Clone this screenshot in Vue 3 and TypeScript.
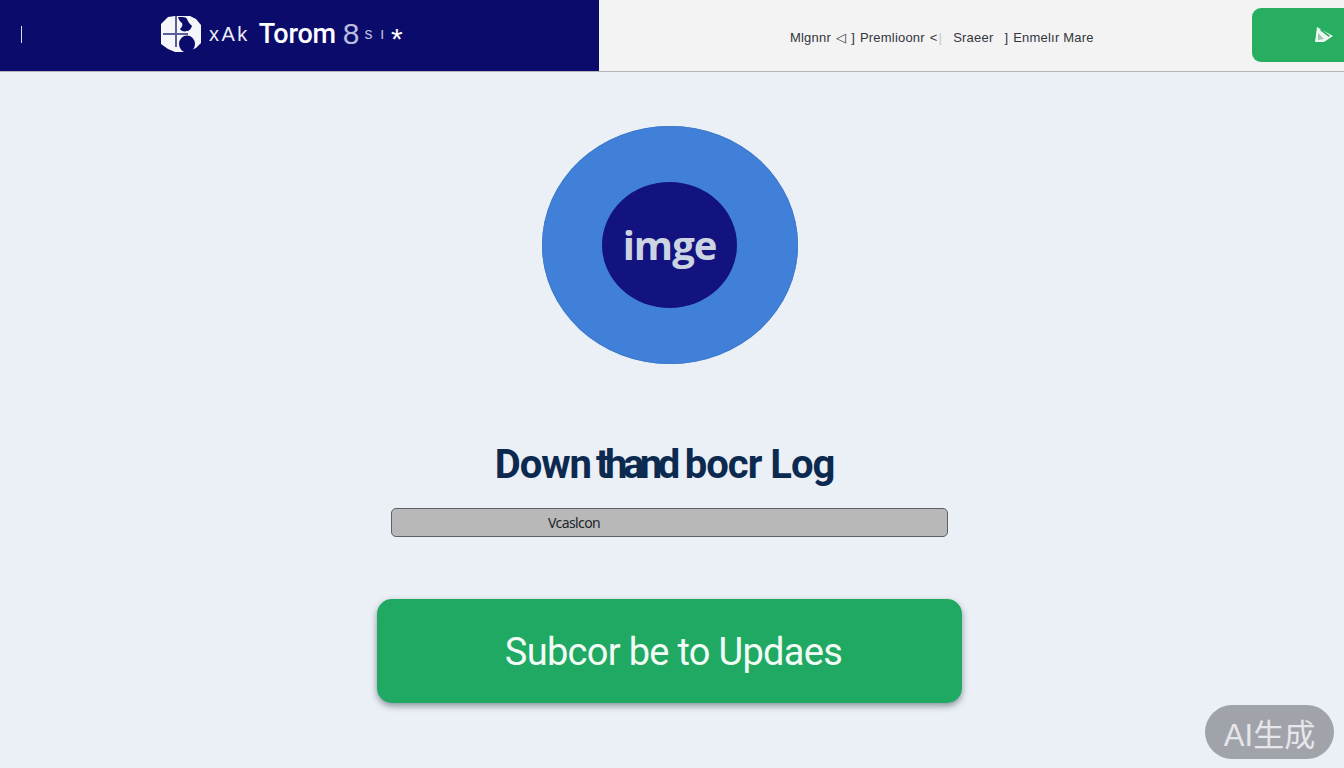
<template>
  <div class="page">
    <header class="topbar">
      <div class="topbar__brand">
        <span class="tick"></span>
        <svg class="logo" width="42" height="36" viewBox="0 0 42 36">
          <path d="M8 1L15 0H30L36 3L41 9V27L36 32L27 36H15L8 33L1 28V8Z" fill="#f5f6fa" />
          <path d="M15 0H17V31H15Z" fill="#5a5e96" />
          <path d="M3 17H28V19H3Z" fill="#5a5e96" />
          <path d="M18 1C23 1 26 1 27 3C28 6 30 8 32 10C31 13 29 15 27 15C24 16 21 15 20 13C22 11 23 9 22 7C20 6 19 4 18 1Z" fill="#0b0b6b" />
          <ellipse cx="27" cy="28" rx="8" ry="8.5" fill="#0b0b6b" />
        </svg>
        <span class="brand-small">xAk</span>
        <span class="brand-name">Torom</span>
        <span class="brand-eight">8</span>
        <span class="brand-tail">s ı</span>
        <span class="brand-star">*</span>
      </div>
      <nav class="topbar__nav">
        <div class="nav-links">
          <span>Mlgnnr</span>
          <span class="nav-mark">◁</span>
          <span>]</span>
          <span>Premlioonr</span>
          <span class="nav-mark">&lt;</span>
          <span class="nav-sep">|</span>
          <span class="wide">Sraeer</span>
          <span>]</span>
          <span>Enmelır Mare</span>
        </div>
        <button class="top-action" type="button" aria-label="Action">
          <svg width="18" height="16" viewBox="0 0 18 16">
            <path d="M2 0L18 9L9 15H0Z" fill="#eef7f1" />
            <path d="M6 1.8L15 8.8L13.6 9.8L5 3.2Z" fill="#27ae60" />
            <path d="M3 6L9 12L3 13Z" fill="#9fc9b0" />
          </svg>
        </button>
      </nav>
    </header>

    <main class="content">
      <div class="disc">
        <div class="disc__inner">imge</div>
      </div>
      <h1 class="title">Down<span class="title__squeeze">thand</span> bocr Log</h1>
      <div class="field"><span>Vcaslcon</span></div>
      <button class="subscribe" type="button">Subcor be to Updaes</button>
    </main>

    <div class="ai-badge">AI生成</div>
  </div>
</template>

<script setup lang="ts">
</script>

<style>
html,
body {
  margin: 0;
  background: #ebeff6;
}
</style>

<style scoped>
.page {
  height: 768px;
  overflow: hidden;
  position: relative;
  background: #ebeff6;
  font-family: "Liberation Sans", Arial, sans-serif;
}

.topbar {
  height: 71px;
  display: flex;
  box-shadow: 0 1px 0 #b4b6bb;
}

.topbar__brand {
  width: 599px;
  box-sizing: border-box;
  padding: 0 0 3px 21px;
  background: #0b0b6b;
  color: #fff;
  display: flex;
  align-items: center;
}

.tick {
  width: 1px;
  height: 17px;
  margin-right: 138px;
  background: #d9dcf0;
}

.logo {
  flex: none;
  margin-right: 7px;
}

.brand-small {
  font-size: 20px;
  margin-right: 9px;
  letter-spacing: 2.5px;
  color: #eceef8;
}

.brand-name {
  font-family: Roboto, sans-serif;
  font-size: 27px;
  font-weight: 500;
  letter-spacing: -0.2px;
  margin-right: 7px;
}

.brand-eight {
  font-size: 30px;
  color: #b9bedf;
  margin-right: 5px;
}

.brand-tail {
  font-size: 16px;
  letter-spacing: 1.5px;
  color: #b9bedf;
  margin-right: 5px;
}

.brand-star {
  font-size: 30px;
  line-height: 1;
  margin-top: 10px;
}

.topbar__nav {
  flex: 1;
  padding: 0 0 0 191px;
  background: #f3f3f4;
  display: flex;
  align-items: center;
  justify-content: space-between;
  overflow: hidden;
}

.nav-links {
  display: flex;
  align-items: center;
  gap: 5px;
  padding-top: 3px;
  font-family: "Liberation Sans", sans-serif;
  font-size: 13px;
  letter-spacing: 0.2px;
  color: #33363c;
  white-space: nowrap;
}

.nav-mark {
  font-size: 13px;
}

.nav-sep {
  color: #c6c8cc;
  margin-left: -4px;
  margin-right: 6px;
}

.wide {
  margin-right: 6px;
}

.top-action {
  width: 110px;
  height: 54px;
  margin-right: -18px;
  margin-top: -1px;
  padding: 0 29px 0 0;
  flex: none;
  border: 0;
  border-radius: 9px;
  background: #27ae60;
  display: flex;
  align-items: center;
  justify-content: flex-end;
}

.content {
  display: flex;
  flex-direction: column;
  align-items: center;
  padding: 55px 5px 0 0;
}

.disc {
  width: 256px;
  height: 238px;
  border-radius: 50%;
  background: #4180d8;
  box-shadow: inset 0 0 0 1px #3f7bcd;
  display: flex;
  align-items: center;
  justify-content: center;
}

.disc__inner {
  width: 135px;
  height: 126px;
  border-radius: 50%;
  background: #13137f;
  color: #ccd3e2;
  font-family: "Open Sans", sans-serif;
  font-size: 40px;
  font-weight: 700;
  letter-spacing: -1px;
  display: flex;
  align-items: center;
  justify-content: center;
  margin-top: -1px;
}

.title {
  margin: 76px 10px 0 0;
  height: 68px;
  font-family: Roboto, sans-serif;
  font-size: 40px;
  line-height: 50px;
  font-weight: 700;
  letter-spacing: -1px;
  color: #0c2a50;
}

.title__squeeze {
  margin-left: 5px;
  letter-spacing: -4.5px;
}

.field {
  width: 557px;
  height: 29px;
  box-sizing: border-box;
  padding-left: 156px;
  border: 1px solid #5d6068;
  border-radius: 5px;
  background: #b8b8b8;
  color: #22252b;
  font-family: "Noto Sans", sans-serif;
  font-size: 14px;
  letter-spacing: -0.6px;
  display: flex;
  align-items: center;
}

.subscribe {
  width: 585px;
  height: 104px;
  margin-top: 62px;
  padding: 2px 0 0 8px;
  border: 0;
  border-radius: 15px;
  background: #20a962;
  color: #f2fbf5;
  font-family: Roboto, sans-serif;
  font-size: 38px;
  letter-spacing: -0.7px;
  box-shadow: 0 3px 6px rgba(40, 60, 70, 0.5);
}

.ai-badge {
  position: absolute;
  left: 1205px;
  top: 705px;
  width: 129px;
  height: 54px;
  border-radius: 27px;
  background: #a1a3aa;
  color: #e6e7ea;
  font-family: "Liberation Sans", "Noto Sans CJK SC", sans-serif;
  font-size: 31px;
  display: flex;
  align-items: center;
  justify-content: center;
}
</style>
